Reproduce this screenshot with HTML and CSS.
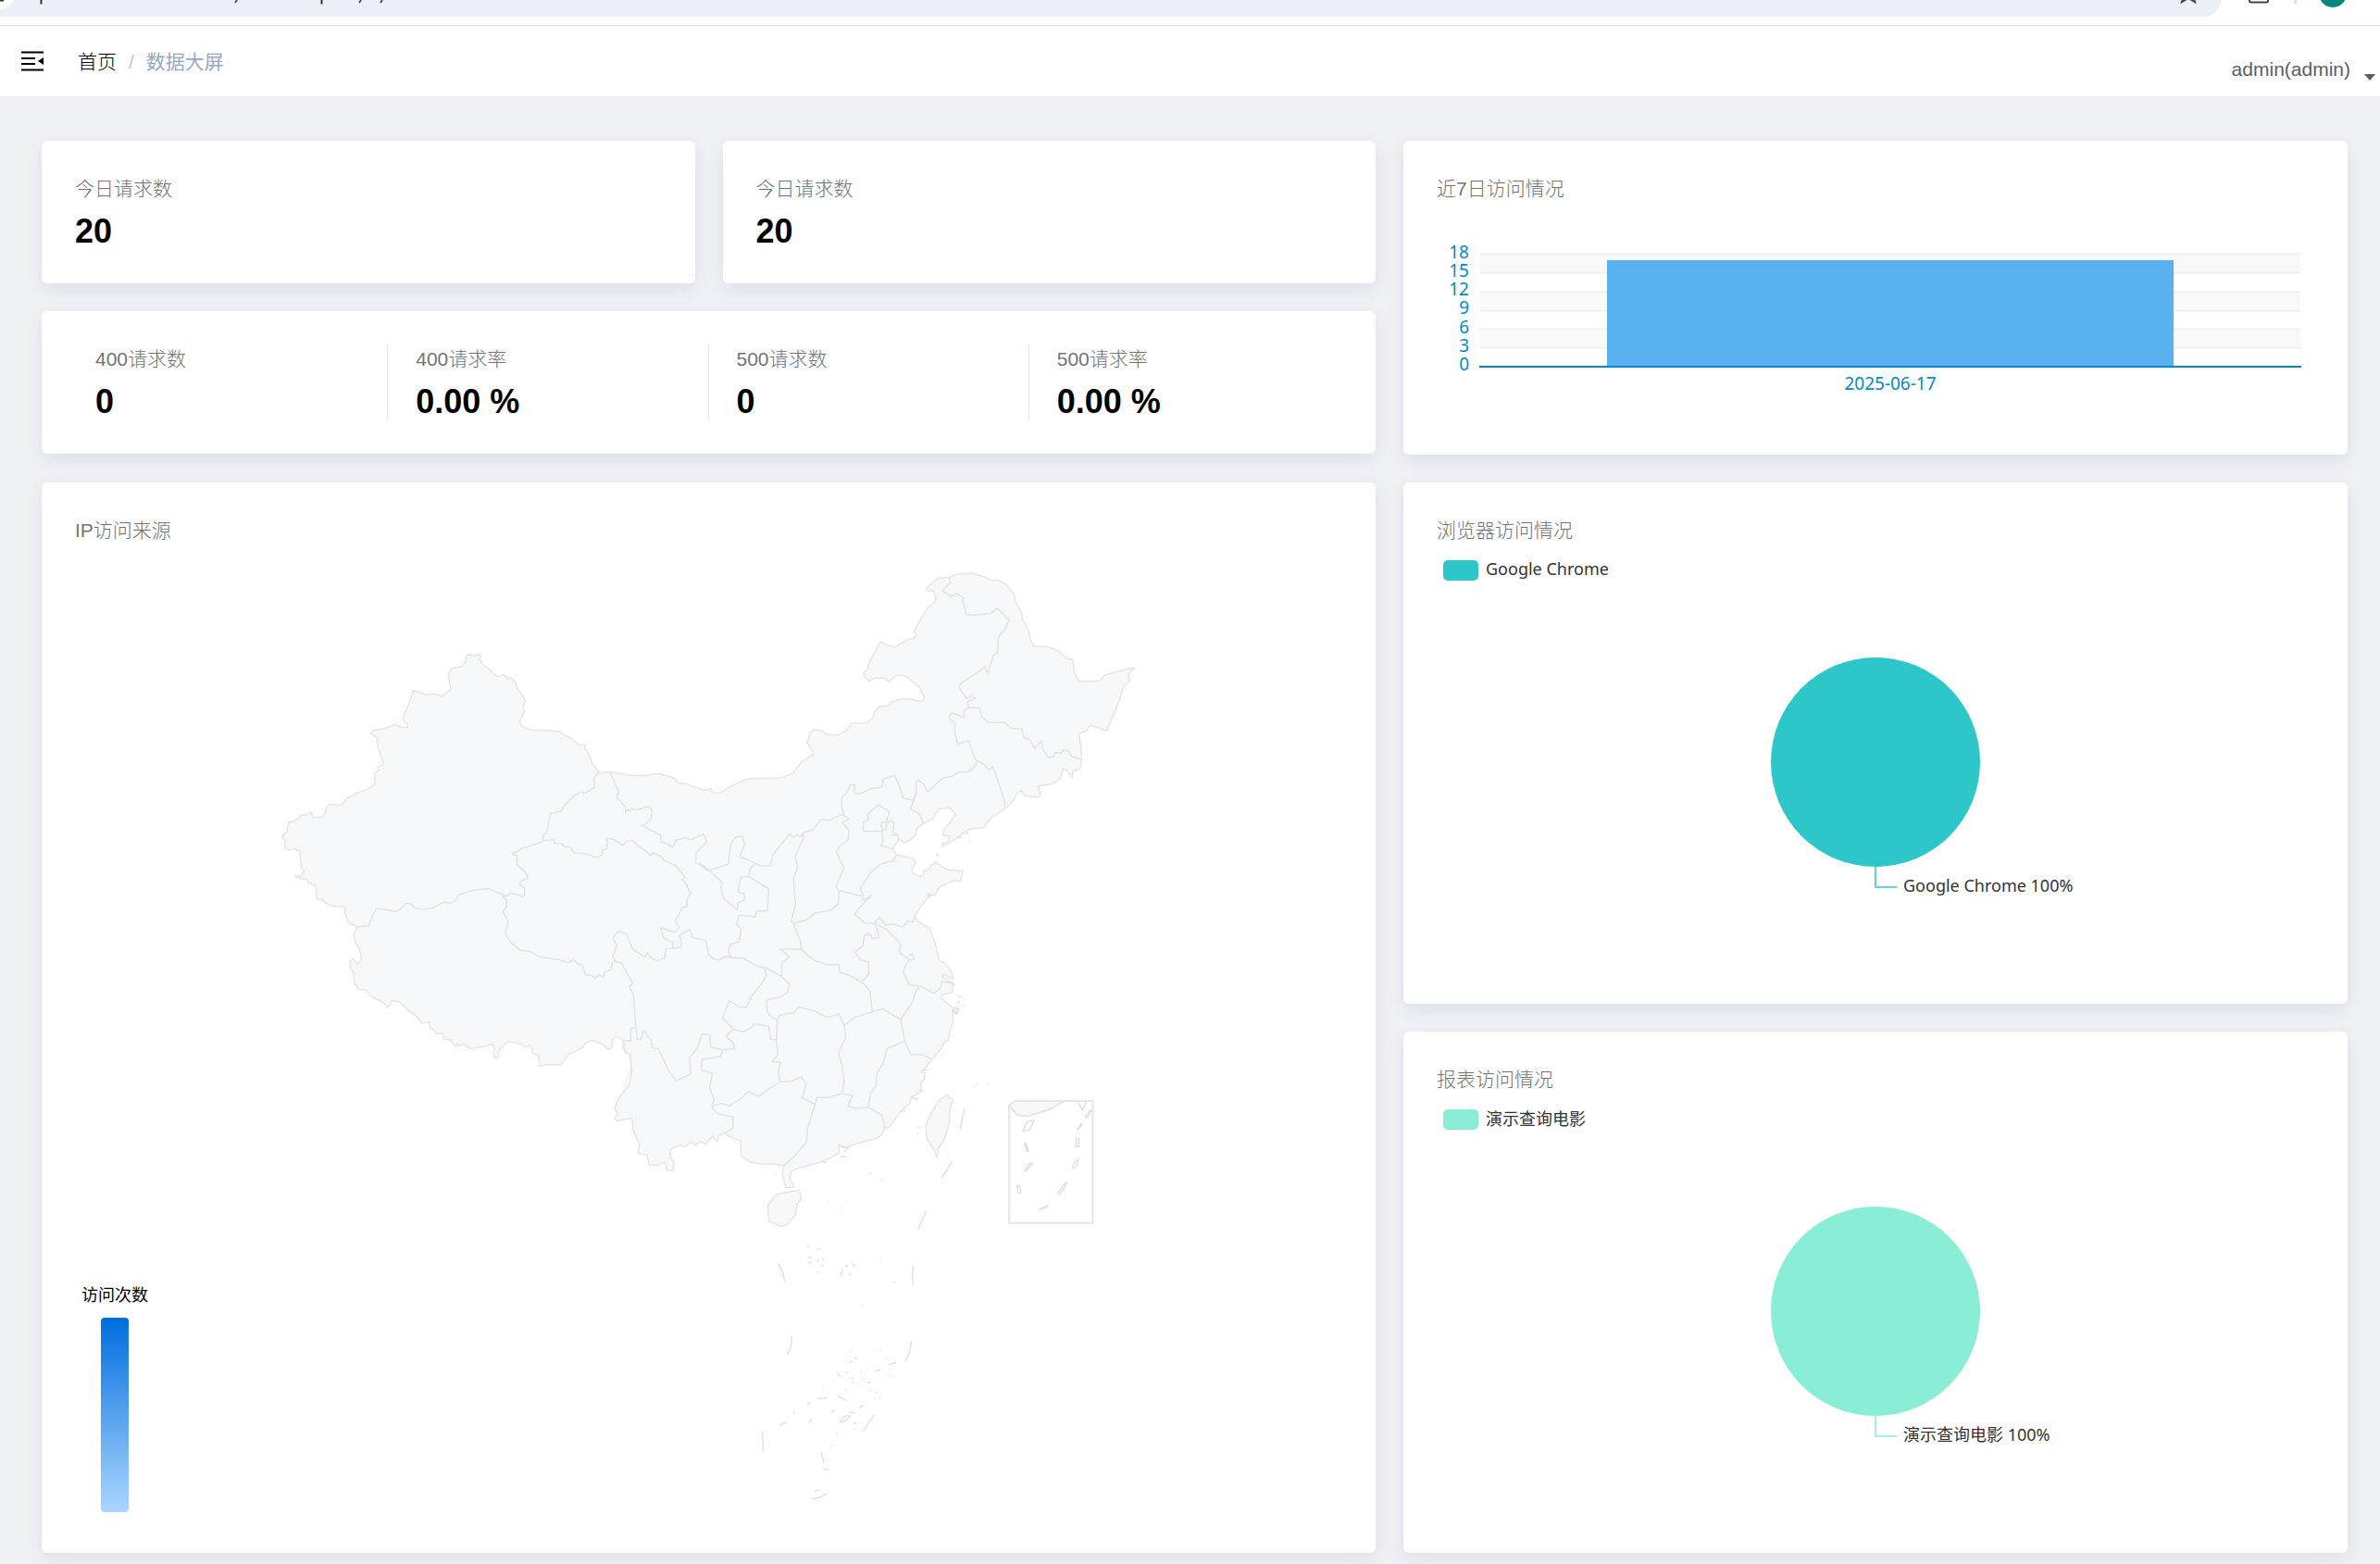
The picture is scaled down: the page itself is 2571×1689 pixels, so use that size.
FILE: index.html
```html
<!DOCTYPE html>
<html lang="zh-CN">
<head>
<meta charset="utf-8">
<meta name="viewport" content="width=device-width, initial-scale=1">
<title>数据大屏</title>
<link rel="stylesheet" href="styles.css">
</head>
<body>
<div class="browser-bar">
  <div class="address">
    <svg width="430" height="18" viewBox="0 0 430 18" aria-hidden="true">
      <circle cx="-1" cy="-7" r="17" fill="#fff"/>
      <path d="M0 .5H4M44.500 0V4.500M347.500 0V4.500" stroke="#333" stroke-width="2" fill="none"/>
      <path d="M256 0L254 3M390 0L388 3M413 0L411 3" stroke="#555" stroke-width="2" fill="none"/>
    </svg>
    <svg width="20" height="18" viewBox="0 0 20 18" aria-hidden="true"><path d="M5 -4L3 2L10 -2L17 2L15 -4" stroke="#474747" stroke-width="2" fill="none"/></svg>
  </div>
  <svg class="browser-actions" width="172" height="18" viewBox="0 0 172 18" aria-hidden="true">
    <path d="M31 -4V1Q31 2.500 33 2.500H49Q51 2.500 51 1V-4" stroke="#474747" stroke-width="2" fill="none"/>
    <rect x="79" y="-6" width="3" height="10" rx="1" fill="#d3e3fd"/>
    <circle cx="121" cy="-7" r="15" fill="#00897b"/>
  </svg>
</div>
<header class="navbar">
  <button class="menu-toggle" type="button" aria-label="收起菜单">
    <svg width="24" height="22" viewBox="0 0 24 22"><path d="M0 1.500H24M0 8H15M0 14H15M0 20.500H24" stroke="#000" stroke-width="2"/><path d="M24 7V15L18 11Z"/></svg>
  </button>
  <nav class="breadcrumb" aria-label="面包屑">
    <a href="#">首页</a><span class="separator">/</span><span class="current">数据大屏</span>
  </nav>
  <button class="user-menu" type="button">admin(admin)
    <svg width="12" height="7" viewBox="0 0 12 7" aria-hidden="true"><path d="M0 0H12L6 7Z" fill="#5a5e66"/></svg>
  </button>
</header>
<main class="dashboard">
  <div class="stats">
    <div class="stat-row">
      <section class="card stat"><h2>今日请求数</h2><p>20</p></section>
      <section class="card stat"><h2>今日请求数</h2><p>20</p></section>
    </div>
    <section class="card stat-group">
      <div class="stat"><h2>400请求数</h2><p>0</p></div>
      <div class="stat"><h2>400请求率</h2><p>0.00 %</p></div>
      <div class="stat"><h2>500请求数</h2><p>0</p></div>
      <div class="stat"><h2>500请求率</h2><p>0.00 %</p></div>
    </section>
  </div>

  <section class="card">
    <h2>近7日访问情况</h2>
    <svg class="chart" viewBox="0 0 948 235" role="img" aria-label="近7日访问情况">
      <g fill="#f9f9f9"><path d="M47 54H933V74H47ZM47 95H933V115H47ZM47 135H933V155H47Z"/></g>
      <path d="M47 54.500H933M47 74.500H933M47 95.500H933M47 115.500H933M47 135.500H933M47 155.500H933" stroke="#f0f0f0" stroke-width="2"/>
      <rect x="184" y="61" width="612" height="115" fill="#5ab1ef"/>
      <path d="M46 176H934" stroke="#008acd" stroke-width="2"/>
      <g class="axis" text-anchor="end">
        <text x="35" y="59">18</text><text x="35" y="79">15</text><text x="35" y="99">12</text><text x="35" y="119">9</text><text x="35" y="140">6</text><text x="35" y="160">3</text><text x="35" y="180">0</text>
      </g>
      <text class="axis" x="490" y="201" text-anchor="middle">2025-06-17</text>
    </svg>
  </section>

  <section class="card map-card">
    <h2>IP访问来源</h2>
    <svg class="chart map" viewBox="81 589 1369 1052" role="img" aria-label="中国地图">
      <g class="fill">
        <path transform="matrix(.33333 0 0 .38265 280 600)" d="M1500 672V1568H1153Z"/>
        <path transform="matrix(.35714 0 0 .33333 700 600)" d="M0 720L212 772L928 1500H0Z"/>
        <path transform="matrix(.3699 0 0 .4209 640 1000)" d="M140 150H1000L1045 220L1051 240L200 310L140 285Z"/>
      </g>
      <g class="land">
        <path transform="matrix(.33333 0 0 .38265 280 600)" d="M1487 671L1466 668 1465 658 1440 662 1415 655 1385 644 1357 641 1343 627 1300 616 1275 617 1240 622 1190 619 1137 611 1100 613 1097 605 1081 589 1063 550 1053 545 1057 534 1035 534 1010 516 975 498 940 493 880 492 852 484 844 466 860 440 854 428 862 412 855 395 838 378 828 355 815 345 805 348 793 337 772 341 752 328 748 320 725 310 718 298 714 293 718 287 715 278 697 283 680 279 668 285 670 298 658 312 625 318 613 332 620 380 608 387 587 398 575 391 540 393 520 386 500 380 485 420 470 448 467 465 482 477 481 486 450 482 442 476 410 487 370 493 360 501 382 513 384 540 400 577 401 591 383 598 390 604 374 614 375 643 360 656 330 665 283 685 280 693 262 705 230 701 217 710 213 730 205 738 175 739 168 723 150 732 133 731 133 738 112 750 95 752 90 780 73 790 85 805 82 818 95 832 115 827 130 834 137 880 146 891 132 906 117 902 119 909 155 914 160 924 180 930 186 945 184 963 192 973 207 971 213 980 240 990 280 992 277 1004 288 1035 318 1048 306 1067 310 1090 325 1110 332 1142 318 1153 305 1138 295 1143 296 1164 307 1180 308 1205 322 1224 345 1226 365 1246 400 1260 418 1276 430 1256 455 1259 475 1278 510 1300 527 1319 550 1315 555 1332 580 1350 597 1348 598 1364 620 1367 636 1386 642 1376 646 1384 660 1378 685 1391 730 1386 755 1377 762 1387 760 1410 768 1421 775 1413 776 1397 805 1371 850 1379 862 1388 877 1382 886 1392 886 1404 905 1412 908 1441 930 1437 975 1437 985 1430 1003 1407 1045 1390 1060 1373 1080 1368 1110 1378 1132 1394 1143 1387 1144 1370 1155 1356 1175 1364 1180 1373 1178 1388 1188 1405 1202 1405 1206 1440 1204 1490 1180 1515 1160 1540 1153 1568"/>
        <path transform="matrix(.35714 0 0 .33333 700 600)" d="M212 772L255 745 305 722 400 721 438 705 465 668 500 645 497 632 481 607 490 575 502 563 525 567 540 578 573 583 605 562 615 543 660 543 682 524 685 508 698 490 728 486 735 475 765 465 800 464 812 471 833 470 836 458 820 425 800 408 778 389 750 388 730 409 715 397 685 397 670 407 653 390 653 378 665 370 668 350 703 279 720 289 747 297 785 272 805 268 811 258 806 245 820 215 845 170 870 150 871 138 865 115 841 113 845 103 878 73 910 70 940 60 980 57 1010 66 1040 80 1060 79 1085 95 1107 125 1112 150 1130 185 1133 208 1150 240 1156 270 1168 295 1205 295 1240 308 1262 330 1285 338 1290 380 1303 407 1365 406 1382 388 1440 370 1472 363 1452 384 1458 405 1437 428 1422 480 1387 567 1337 550 1325 568 1303 577 1310 620 1312 660 1306 692 1285 700 1284 720 1268 697 1255 690 1246 724 1222 740 1180 747 1187 775 1180 783 1140 778 1130 760 1115 770 1110 785 1088 814 1040 847 1015 882 975 885 912 930 905 935 888 942 890 932 908 928 912 910 893 905 895 890 932 838 912 817 880 820 860 853 833 868 812 885 810 903 795 920 778 930 758 918 750 935 740 950 752 970 800 980 810 997 797 1015 800 1028 822 1040 833 1037 835 1020 850 1018 855 1004 873 996 905 1018 952 1022 945 1055 925 1052 880 1075 868 1098 848 1105 830 1130 808 1165 812 1182 852 1208 870 1262 880 1310 900 1322 920 1355 922 1372 895 1357 890 1364 928 1390 920 1395 922 1415 890 1422 888 1434 925 1470 920 1500"/>
        <path transform="matrix(.3699 0 0 .4209 640 1000)" d="M1051 237L1053 250 1045 264 1040 290 1026 300 1018 315 1004 330 990 345 960 375 972 378 968 395 960 400 958 425 930 440 927 455 900 475 880 500 865 517 852 520 845 535 830 545 775 557 735 570 720 562 720 582 680 602 640 612 600 622 580 630 576 648 590 670 565 672 555 640 558 615 530 610 500 612 460 605 435 590 432 550 410 545 385 532 368 538 365 552 350 540 330 560 315 553 300 562 288 552 268 568 258 562 228 572 227 592 238 608 236 628 218 628 212 605 190 615 165 612 160 588 133 583 138 560 118 523 115 493 70 500 65 493 75 485 65 465 78 440 108 408 115 370 110 328 98 325 90 293"/>
        <g transform="matrix(.3699 0 0 .4209 640 1000)">
          <path d="M605 678L610 700 597 715 592 742 570 765 552 771 515 758 512 718 535 690 560 684Z"/>
          <path d="M1036 433L1053 447 1045 465 1042 505 1028 548 1010 570 1006 595 998 575 976 545 974 510 984 490 1010 450Z"/>
        </g>
      </g>
      <g class="borders">
        <path transform="matrix(.33333 0 0 .38265 280 600)" d="M318 1048L355 1044 370 1011 380 996 410 999 440 1004 455 1000 475 981 495 983 500 993 530 998 560 995 600 978 620 981 637 973 645 957 695 944 742 940 790 957 800 961 815 952 855 962 861 958 860 938 845 930 846 920 872 909 862 892 836 873 836 845 825 846 819 837 828 840 850 827 920 807 918 795 932 780 944 728 980 721 985 710 1015 682 1045 665 1051 672 1087 655 1084 628 1100 613M1137 611L1166 669 1157 681 1187 709 1187 724 1195 717 1200 722 1208 715 1225 718 1260 708 1273 716 1271 740 1250 760 1240 762 1270 775 1301 789 1302 807 1320 812 1340 825 1350 803 1380 797 1400 802 1440 785 1451 808 1416 838 1414 865 1455 890M920 804L955 802 957 812 980 813 990 822 1008 822 1020 838 1060 842 1092 852 1110 845 1113 830 1127 828 1127 798 1150 801 1178 818 1190 807 1208 803 1230 820 1260 838 1268 847 1275 838 1305 850 1310 860 1350 875 1380 908 1370 915 1382 925 1398 953 1386 970 1386 990 1368 995 1362 1012 1348 1028 1362 1050 1345 1063 1300 1050 1312 1080 1340 1092 1340 1108 1318 1110 1315 1135 1290 1143 1270 1136 1258 1122 1250 1133 1210 1110 1190 1068 1165 1059 1147 1078 1158 1100 1145 1135 1158 1145M1340 1108L1365 1105 1370 1092 1362 1072 1395 1055 1405 1078 1448 1087 1457 1128 1480 1141 1495 1140M800 961L788 963 802 972 802 990 790 1005 806 1030 798 1068 815 1092 845 1113 880 1118 912 1133 975 1141 1000 1149 1020 1140 1035 1155 1045 1153 1058 1183 1075 1184 1090 1192 1100 1183 1117 1189 1120 1175 1140 1168 1145 1145"/>
        <path transform="matrix(.35714 0 0 .33333 700 600)" d="M910 70L915 87 890 114 918 133 933 122 955 138 953 150 963 190 985 193 1035 188 1058 170 1092 210 1080 238 1060 262 1057 318 1045 322 1028 383 1019 360 995 380 945 415 942 430 965 465 978 453 990 462 966 475 970 493 1003 493 1010 523 1030 541 1078 541 1100 560 1130 560 1138 590 1155 597 1170 625 1190 600 1195 630 1212 655 1228 650 1230 638 1250 640 1256 630 1270 632 1280 650 1312 661M970 493L957 500 955 525 935 515 918 510 911 524 928 545 928 575 937 612 970 599 987 655 995 665 1015 675 1032 695 1043 683 1068 760 1080 800 1078 815M995 665L990 682 970 700 940 702 920 715 890 722 865 748 845 765 833 740 818 727 810 735 812 765 805 792 793 820 822 838 833 868M805 792L772 786 760 745 745 713 712 723 708 750 690 752 670 757 640 772 625 770 625 742 612 742 598 772 587 780 585 812 593 835 570 847 550 857 522 855 500 888 470 897M593 835L588 840 608 852 588 865 608 890 605 923 580 940 570 962 592 1010 580 1045 568 1070 578 1085 605 1092 640 1102 650 1098 643 1080 670 1030 705 998 740 990 752 970M650 1098L648 1118 675 1102 640 1140 625 1162 655 1190 685 1192 700 1172 720 1198 740 1193 770 1203 785 1185 800 1187 808 1165M698 808L730 830 722 860 705 868 708 893 660 893 650 890 653 862 668 855 663 838ZM722 865L735 858 745 868 740 895 755 905 758 918M708 893L710 930 705 940 740 950M722 865L720 888 708 890M470 897L470 915 445 975 453 1010 440 1045 446 1130 433 1185 440 1192 480 1180 505 1158 550 1150 575 1130 578 1085M470 897L465 910 450 905 440 912 428 902 415 920 395 945 378 970 370 1005 340 1005 325 997 278 975 292 935 285 908 265 912 250 935 243 1000 185 1020 225 1060 220 1075 228 1110 270 1148 272 1125 292 1115 290 1095 272 1090 280 1042 305 1040 308 1015 325 997M305 1040L365 1080 362 1150 328 1152 325 1170 275 1165 268 1195 282 1210 275 1252 248 1260 243 1285 250 1298 230 1300 215 1310M230 1300L290 1305 330 1330 355 1335 405 1363 405 1318 428 1300 400 1275 463 1275 463 1255 440 1192M463 1275L500 1310 540 1325 578 1325 580 1350 610 1360 645 1382 668 1355 667 1317 640 1308 627 1283 650 1265 655 1230 668 1225 680 1240 698 1238 695 1215 685 1192 720 1210 748 1240 765 1260 760 1285 790 1310 805 1308 800 1290 788 1295M790 1310L778 1330 773 1350 790 1390 825 1395 865 1418 885 1400 890 1380 925 1385M185 1020L155 995"/>
        <path transform="matrix(.3699 0 0 .4209 640 1000)" d="M60 90L85 95 118 148 107 155 120 178 127 260 130 290 140 292 150 267 172 295 175 312 192 315 225 375 245 397 287 380 283 340 308 310 320 277 343 280 345 310 380 318 415 315 410 298 390 283 412 265 380 235 400 192 430 208 450 208 465 180 500 140 508 125 500 106M127 260L112 262 112 295 90 293M380 318L375 335 320 342 318 370 350 378 342 415 355 445 348 463 365 482 410 490 410 520 385 532M412 265L440 272 465 260 470 252 500 255 515 258 520 290 537 293 540 240 525 235 510 220 508 190 550 182 570 170 575 150 553 130M537 293L542 330 525 348 550 350 542 375 548 400 520 415 485 437 455 425 430 445 400 462 378 455 348 463M548 400L580 398 610 388 625 405 612 440 650 458 628 520 625 555 590 590 558 615M540 240L550 228 590 222 600 208 650 218 685 235 720 225 735 255 765 235 817 220 810 165 785 142M817 220L848 213 870 225 900 240 935 195 945 165 955 158M900 240L912 295 930 330 960 330 990 340M912 295L860 315 850 350 830 380 828 410 812 430 805 465 845 485 855 520M735 255L740 285 718 325 730 360 735 400 728 430 690 440 655 440 650 458M728 430L760 435 745 462 770 468 805 465"/>
      </g>
      <g class="islands" transform="matrix(.3699 0 0 .4209 640 1000)">
        <path d="M541 865L555 888 563 914M582 1052L580 1080 570 1100M496 1298L499 1348M641 1471L665 1466 685 1456M791 1295L823 1254M913 1116L925 1096 932 1064M935 872V922M951 780L974 732M1019 648L1051 604M1074 522L1086 468"/>
        <path d="M547 1284L558 1274 568 1275M722 1273L735 1272 753 1258 740 1256ZM698 1250L706 1241M668 1350L676 1378M673 1392L688 1396M648 1450L662 1447M716 1205L740 1218M633 1275L640 1265M568 1260H572M586 1248L593 1250M627 1229L637 1222M657 1213L685 1211M670 1181H673M714 1147L725 1157M735 1115H738M749 1122L759 1116M754 1090H758M764 1107L772 1110M838 1088H842M862 1109H866M865 1125L887 1120M828 1143L840 1138M863 1155H868M803 1172L812 1170M826 1197L832 1199M808 1191L814 1193M790 1163H795M782 1147H786M755 1160H761M757 1172H761M735 1190H739M778 1236L793 1230M750 1248L768 1250M762 1275H770M764 1290H768M712 1304H716M698 1333H702M822 1212H826M838 1204H842M740 1145H746M800 1135H803M627 822H631M658 828L664 830M629 852L640 850M630 865L642 863M653 860L662 857M670 855H678M668 870L675 874M657 888H661M725 900L730 882M738 873L748 872M757 865L768 875M748 893L756 895M838 859H842M880 914H885M785 971H788M688 709H691M723 723H726M808 634L813 638M842 650L848 655M531 635H534M953 515L957 519M949 533H952M1034 587H1037M1031 559H1034M1057 425H1060M1111 413H1115M1120 405H1124M1155 405H1160M1050 284H1053M1016 330H1019M1068 178L1076 184M1085 177H1088M1064 200L1072 192M1055 205L1070 215 1060 225 1056 215M1083 205H1086M720 562L745 570 735 580M670 605L683 607M725 592H742M930 440L950 445M955 420L966 425M900 472L914 475M963 372L978 368"/>
        <path d="M1216 461L1235 448 1378 450 1335 471 1272 488 1242 486Z" class="inset-land"/>
        <path d="M1417 450L1431 473 1443 450M1268 502L1289 499 1277 523 1258 526ZM1262 558L1269 579 1273 578 1266 557ZM1262 628L1275 610 1286 609 1268 627ZM1239 666L1243 685 1251 685 1247 666ZM1304 728L1331 717 1321 724ZM1358 688L1380 659 1386 658 1367 687ZM1401 621L1411 602 1420 601 1410 621ZM1412 545H1420V566H1412ZM1416 524L1425 508 1431 507ZM1439 490L1453 473 1457 473 1447 490Z"/>
        <path d="M1217 461V762H1461V449H1235" class="inset-frame"/>
      </g>
      <g class="islands" transform="matrix(.35714 0 0 .33333 700 600)"><path d="M935 916L950 912M948 900H953M962 895L968 902M971 925H974M868 992H872M872 975L878 967M846 1098L854 1096 850 1106ZM736 905H752M905 1380L928 1390M920 1475L940 1465 935 1485Z"/></g>
    </svg>
    <div class="visual-map"><span>访问次数</span><div class="scale"></div></div>
  </section>

  <div class="pies">
    <section class="card">
      <h2>浏览器访问情况</h2>
      <div class="legend"><span class="swatch teal"></span><span class="legend-name">Google Chrome</span></div>
      <svg class="chart" viewBox="0 0 948 421" role="img" aria-label="Google Chrome 100%">
        <path d="M474 300V331H497" fill="none" stroke="#5fd3d5" stroke-width="2"/>
        <circle cx="474" cy="196" r="113" fill="#2ec7c9"/>
        <text class="label" x="504" y="336">Google Chrome 100%</text>
      </svg>
    </section>
    <section class="card">
      <h2>报表访问情况</h2>
      <div class="legend"><span class="swatch mint"></span><span class="legend-name">演示查询电影</span></div>
      <svg class="chart" viewBox="0 0 948 421" role="img" aria-label="演示查询电影 100%">
        <path d="M474 300V331H497" fill="none" stroke="#a6f2e0" stroke-width="2"/>
        <circle cx="474" cy="196" r="113" fill="#8aedd5"/>
        <text class="label" x="504" y="336">演示查询电影 100%</text>
      </svg>
    </section>
  </div>
</main>
</body>
</html>
```
FILE: styles.css
```css
* { box-sizing: border-box; }

body {
  margin: 0;
  min-height: 100vh;
  background: #eff1f5;
  color: #000;
  font-family: "Liberation Sans", "Noto Sans CJK SC", sans-serif;
  font-size: 21px;
}

h2, p { margin: 0; }
svg { display: block; }

.browser-bar {
  display: flex;
  height: 28px;
  background: #fff;
  border-bottom: 1px solid #dfe1e5;
}

.address {
  flex: 1;
  display: flex;
  justify-content: space-between;
  height: 18px;
  padding-right: 25px;
  background: #ecf0f9;
  border-radius: 0 0 24px 0;
}

.navbar {
  display: flex;
  align-items: center;
  height: 76px;
  padding: 0 5px 0 23px;
  background: #fff;
}

button {
  padding: 0;
  border: 0;
  background: none;
  font: inherit;
}

.breadcrumb {
  display: flex;
  align-items: center;
  gap: 13px;
  margin-left: 37px;
  padding-top: 2px;
  line-height: 32px;
}

.breadcrumb a { color: #000; font-weight: 300; text-decoration: none; }
.separator { color: #c0c4cc; }
.current { color: #97a8be; }

.user-menu {
  display: flex;
  align-items: flex-end;
  gap: 15px;
  margin-left: auto;
  padding-top: 18px;
  color: #5a5e66;
}

.dashboard {
  display: grid;
  grid-template-columns: 1441fr 1020fr;
  gap: 30px;
  padding: 48px 35px 12px 45px;
}

.card {
  min-width: 0;
  padding: 36px;
  background: #fff;
  border-radius: 6px;
  box-shadow: 0 6px 20px rgba(20, 50, 60, .09);
}

.card h2 {
  color: #737373;
  font-size: 21px;
  font-weight: 300;
  line-height: 32px;
}

.stats, .pies {
  display: flex;
  flex-direction: column;
  gap: 30px;
}

.stat-row { display: flex; gap: 30px; }
.stat-row .card { flex: 1; }

.stat p {
  padding-top: 10px;
  font-size: 36px;
  font-weight: 700;
  line-height: 40px;
}

.stat-group {
  display: grid;
  grid-template-columns: repeat(4, 1fr);
  padding: 36px 28px;
}

.stat-group .stat { padding-left: 30px; }
.stat-group .stat:not(:last-child) { border-right: 1px solid #e6e6e6; }

.chart { width: 100%; height: auto; }

.axis, .label, .legend, .visual-map {
  font-family: "Noto Sans", "Noto Sans CJK SC", sans-serif;
  font-size: 18px;
}

.axis { fill: #008acd; font-size: 19px; }
.label { fill: #333; }

.legend {
  display: flex;
  align-items: center;
  gap: 8px;
  height: 22px;
  margin-top: 16px;
  padding-left: 7px;
  color: #333;
}

.legend-name { padding-bottom: 4px; }
.swatch { width: 38px; height: 22px; border-radius: 5px; }
.teal { background: #2ec7c9; }
.mint { background: #8aedd5; }

.map-card { position: relative; }

.map path { vector-effect: non-scaling-stroke; stroke-linejoin: round; }
.fill { fill: #f7f8fa; }
.land { fill: #f7f8fa; stroke: #e5e6e8; stroke-width: 1.5px; }
.borders { fill: none; stroke: #e2e3e5; stroke-width: 1.5px; }
.islands { fill: none; stroke: #dfe1e5; stroke-width: 1.5px; }
.islands .inset-land { fill: #f7f8fa; }
.islands .inset-frame { stroke: #e6e6e6; stroke-width: 2px; }

.visual-map {
  position: absolute;
  left: 43px;
  bottom: 44px;
  display: flex;
  flex-direction: column;
  align-items: center;
  gap: 12px;
  line-height: 26px;
}

.scale {
  width: 30px;
  height: 210px;
  border-radius: 4px;
  background: linear-gradient(#006edd, #abd6ff);
}
```
